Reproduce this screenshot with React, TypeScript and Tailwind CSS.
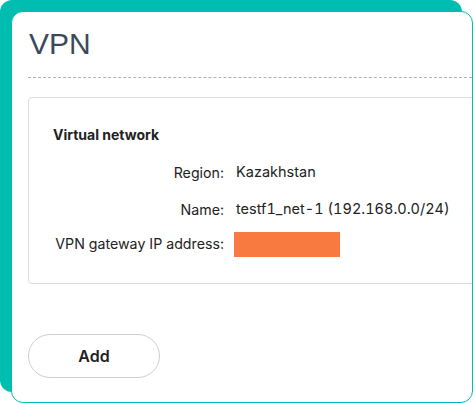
import React from 'react';

const rows = [
  { label: 'Region:', value: 'Kazakhstan' },
  { label: 'Name:', value: 'testf1_net-1 (192.168.0.0/24)' },
];

export default function App() {
  return (
    <div className="w-[475px] h-[404px] bg-white overflow-hidden font-['Liberation_Sans',Arial,sans-serif]">
      <div className="ml-[11px] mt-[11px] w-[462px] h-[392px] rounded-[12px] border border-[#00bdb2] bg-white shadow-[-11px_-11px_0_0_#00bdb2] overflow-hidden">
        <div className="pl-[17px] pt-[15px] h-[65px]">
          <h1 className="text-[30px] leading-[34px] text-[#3b4a5a]">VPN</h1>
        </div>
        <div className="ml-[16px] border-t border-dashed border-[#b0b0b0]" />
        <div className="ml-[16px] mt-[19px] w-[470px] h-[187px] rounded-[4px] border border-[#dcdcdc] pl-[24px] pt-[27px] font-['Inter',sans-serif]">
          <div className="text-[14px] leading-[20px] font-bold text-[#222]">Virtual network</div>
          <div className="mt-[18px] flex flex-col gap-[17px] text-[14.5px] text-[#222]">
            {rows.map((r) => (
              <div key={r.label} className="flex items-center h-[20px]">
                <span className="w-[171px] shrink-0 text-right whitespace-nowrap text-[14.2px]">{r.label}</span>
                <span className="ml-[12px] -mt-[3px] tabular-nums whitespace-nowrap">{r.value}</span>
              </div>
            ))}
            <div className="flex items-center h-[20px] -mt-[3px]">
              <span className="w-[171px] shrink-0 text-right whitespace-nowrap text-[14.2px]">VPN gateway IP address:</span>
              <span className="ml-[10px] w-[106px] h-[25px] shrink-0 bg-[#f97a40]" />
            </div>
          </div>
        </div>
        <button className="ml-[16px] mt-[50px] w-[132px] h-[44px] rounded-full border border-[#cfcfcf] font-['Inter',sans-serif] text-[16px] font-semibold text-[#222]">
          Add
        </button>
      </div>
    </div>
  );
}
